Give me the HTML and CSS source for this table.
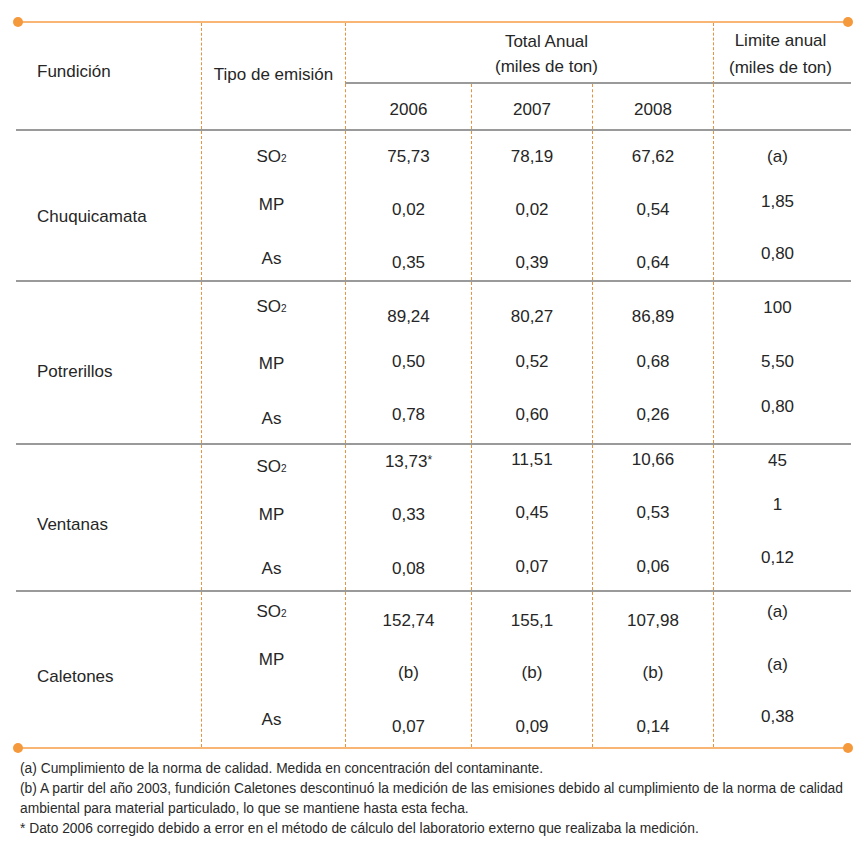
FILE: index.html
```html
<!DOCTYPE html>
<html lang="es">
<head>
<meta charset="utf-8">
<title>Emisiones fundiciones</title>
<link rel="stylesheet" href="styles.css">
</head>
<body>
<div class="page">
  <div class="rule"></div>
  <div class="head">
    <div class="h-fund">Fundición</div>
    <div class="h-tipo dash">Tipo de emisión</div>
    <div class="h-total dash">Total Anual<br>(miles de ton)</div>
    <div class="h-limit dash">Limite anual<br>(miles de ton)</div>
    <div class="h-year dash">2006</div>
    <div class="h-year dash">2007</div>
    <div class="h-year dash">2008</div>
    <div class="h-year dash"></div>
  </div>

  <div class="group g1">
    <div class="c name"><div class="v">Chuquicamata</div></div>
    <div class="c tipo dash"><div class="v">SO<span class="sub">2</span></div><div class="v">MP</div><div class="v">As</div></div>
    <div class="c d dash"><div class="v">75,73</div><div class="v">0,02</div><div class="v">0,35</div></div>
    <div class="c d dash"><div class="v">78,19</div><div class="v">0,02</div><div class="v">0,39</div></div>
    <div class="c d dash"><div class="v">67,62</div><div class="v">0,54</div><div class="v">0,64</div></div>
    <div class="c lim dash"><div class="v">(a)</div><div class="v">1,85</div><div class="v">0,80</div></div>
  </div>

  <div class="group g2">
    <div class="c name"><div class="v">Potrerillos</div></div>
    <div class="c tipo dash"><div class="v">SO<span class="sub">2</span></div><div class="v">MP</div><div class="v">As</div></div>
    <div class="c d dash"><div class="v">89,24</div><div class="v">0,50</div><div class="v">0,78</div></div>
    <div class="c d dash"><div class="v">80,27</div><div class="v">0,52</div><div class="v">0,60</div></div>
    <div class="c d dash"><div class="v">86,89</div><div class="v">0,68</div><div class="v">0,26</div></div>
    <div class="c lim dash"><div class="v">100</div><div class="v">5,50</div><div class="v">0,80</div></div>
  </div>

  <div class="group g3">
    <div class="c name"><div class="v">Ventanas</div></div>
    <div class="c tipo dash"><div class="v">SO<span class="sub">2</span></div><div class="v">MP</div><div class="v">As</div></div>
    <div class="c d dash"><div class="v">13,73<span class="ast">*</span></div><div class="v">0,33</div><div class="v">0,08</div></div>
    <div class="c d dash"><div class="v">11,51</div><div class="v">0,45</div><div class="v">0,07</div></div>
    <div class="c d dash"><div class="v">10,66</div><div class="v">0,53</div><div class="v">0,06</div></div>
    <div class="c lim dash"><div class="v">45</div><div class="v">1</div><div class="v">0,12</div></div>
  </div>

  <div class="group g4">
    <div class="c name"><div class="v">Caletones</div></div>
    <div class="c tipo dash"><div class="v">SO<span class="sub">2</span></div><div class="v">MP</div><div class="v">As</div></div>
    <div class="c d dash"><div class="v">152,74</div><div class="v">(b)</div><div class="v">0,07</div></div>
    <div class="c d dash"><div class="v">155,1</div><div class="v">(b)</div><div class="v">0,09</div></div>
    <div class="c d dash"><div class="v">107,98</div><div class="v">(b)</div><div class="v">0,14</div></div>
    <div class="c lim dash"><div class="v">(a)</div><div class="v">(a)</div><div class="v">0,38</div></div>
  </div>

  <div class="rule"></div>

  <div class="notes">
    <p>(a) Cumplimiento de la norma de calidad. Medida en concentración del contaminante.</p>
    <p>(b) A partir del año 2003, fundición Caletones descontinuó la medición de las emisiones debido al cumplimiento de la norma de calidad<br>ambiental para material particulado, lo que se mantiene hasta esta fecha.</p>
    <p>* Dato 2006 corregido debido a error en el método de cálculo del laboratorio externo que realizaba la medición.</p>
  </div>
</div>
</body>
</html>
```
FILE: styles.css
```css
* { box-sizing: border-box; }

body {
  margin: 0;
  background: #ffffff;
  color: #262626;
  font-family: "Liberation Sans", Arial, sans-serif;
  font-size: 17px;
}

.page {
  width: 867px;
  padding: 21px 16px 0 16px;
}

.rule {
  position: relative;
  height: 2px;
  width: 830px;
  margin-left: 2px;
  background: #f8b574;
}
.rule::before,
.rule::after {
  content: "";
  position: absolute;
  top: -4px;
  width: 10px;
  height: 10px;
  border-radius: 50%;
  background: #f59a3c;
}
.rule::before { left: -5px; }
.rule::after { right: -5px; }

.dash { border-left: 1px dashed #e8923f; }

.head {
  display: grid;
  grid-template-columns: 185px 144px 126px 121px 121px 138px;
  grid-template-rows: 61px 45px;
}
.h-fund {
  grid-row: 1 / 3;
  padding: 39px 0 0 21px;
  line-height: 20px;
}
.h-tipo {
  grid-row: 1 / 3;
  text-align: center;
  padding-top: 42px;
  line-height: 20px;
}
.h-total {
  grid-column: 3 / 6;
  text-align: center;
  padding: 6px 0 0 34px;
  line-height: 25px;
  border-bottom: 2px solid #9a9a9a;
}
.h-limit {
  text-align: center;
  padding: 4px 4px 0 0;
  line-height: 27px;
  border-bottom: 2px solid #9a9a9a;
}
.h-year {
  text-align: center;
  padding-top: 16px;
  line-height: 20px;
}

.group {
  display: grid;
  grid-template-columns: 185px 144px 126px 121px 121px 138px;
  border-top: 2px solid #9a9a9a;
}
.g1 { height: 151px; }
.g2 { height: 163px; }
.g3 { height: 147px; }
.g4 { height: 157px; }

.c {
  display: flex;
  flex-direction: column;
  line-height: 20px;
  padding-top: var(--a);
  text-align: center;
}
.c .v:nth-child(2) { margin-top: var(--b); }
.c .v:nth-child(3) { margin-top: var(--c); }

.name { text-align: left; padding-left: 21px; }
.tipo { padding-right: 4px; }
.lim { padding-right: 10px; }

.sub { font-size: 10px; }
.ast { font-size: 12px; vertical-align: 3px; }

.g1 .name { --a: 76px; }
.g1 .tipo { --a: 16px; --b: 26px; --c: 34px; }
.g1 .d    { --a: 16px; --b: 33px; --c: 33px; }
.g1 .lim  { --a: 16px; --b: 25px; --c: 32px; }

.g2 .name { --a: 80px; }
.g2 .tipo { --a: 15px; --b: 35px; --c: 35px; }
.g2 .d    { --a: 25px; --b: 25px; --c: 33px; }
.g2 .lim  { --a: 16px; --b: 34px; --c: 25px; }

.g3 .name { --a: 70px; }
.g3 .tipo { --a: 12px; --b: 26px; --c: 34px; }
.g3 .d    { --a: 5px;  --b: 33px; --c: 34px; }
.g3 .lim  { --a: 6px;  --b: 24px; --c: 33px; }

.g4 .name { --a: 75px; }
.g4 .tipo { --a: 10px; --b: 26px; --c: 40px; }
.g4 .d    { --a: 19px; --b: 32px; --c: 34px; }
.g4 .lim  { --a: 10px; --b: 33px; --c: 32px; }

.notes {
  padding: 10px 0 0 4px;
  font-size: 13.8px;
  line-height: 20px;
  color: #2a2a2a;
  white-space: nowrap;
}
.notes p { margin: 0; }
```
